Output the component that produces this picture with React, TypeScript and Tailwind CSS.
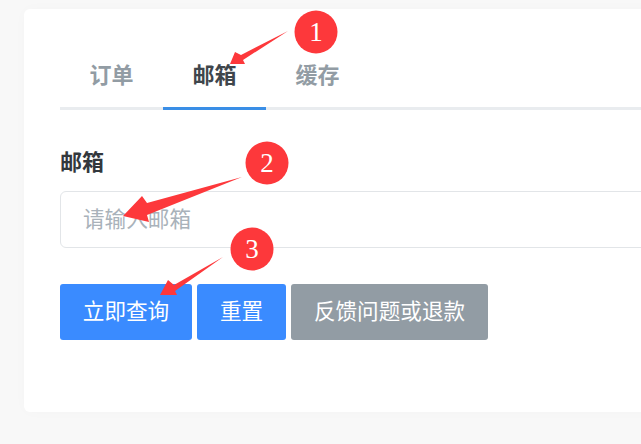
const font = "font-['Liberation_Sans','Noto_Sans_CJK_SC',sans-serif]";

const Marker = ({ cx, cy, n }: { cx: number; cy: number; n: string }) => (
  <g>
    <circle cx={cx} cy={cy} r={21.5} fill="#fd383b" />
    <text x={cx} y={cy + 9} textAnchor="middle" fontSize="27" fill="#fff" fontFamily="Liberation Serif, serif">
      {n}
    </text>
  </g>
);

export default function App() {
  return (
    <div className={`relative h-[444px] w-[641px] overflow-hidden bg-[#f8f8f8] pl-6 pt-[9px] ${font}`}>
      <div className="h-[403px] w-[700px] rounded-md bg-white pl-9 pt-[34px] shadow-[0_0_14px_rgba(0,0,0,0.02)]">
        {/* tabs */}
        <div className="flex h-[67px] border-b-[3px] border-[#e9ecef] text-[22px] font-bold">
          <div className="-mb-[3px] flex w-[103px] justify-center pt-[17px] leading-[32px] text-[#929ca4]">订单</div>
          <div className="-mb-[3px] flex w-[103px] justify-center border-b-[3px] border-[#3a8ee6] pt-[17px] leading-[32px] text-[#3f464c]">邮箱</div>
          <div className="-mb-[3px] flex w-[103px] justify-center pt-[17px] leading-[32px] text-[#929ca4]">缓存</div>
        </div>

        <div className="mt-[37px] text-[22px] font-bold leading-[32px] text-[#33383d]">邮箱</div>
        <input
          placeholder="请输入邮箱"
          className="mt-[12px] block h-[57px] w-[640px] rounded-md border border-[#e2e5e8] px-[22px] text-[21.6px] placeholder:text-[#a9b2ba]"
        />

        <div className="mt-9 flex gap-[5px] text-[21.6px] text-white">
          <button className="h-14 w-[132px] rounded-[3px] bg-[#3a8bff]">立即查询</button>
          <button className="h-14 w-[89px] rounded-[3px] bg-[#3a8bff]">重置</button>
          <button className="h-14 w-[197px] rounded-[3px] bg-[#929ca4]">反馈问题或退款</button>
        </div>
      </div>

      {/* screenshot annotations */}
      <svg className="absolute left-0 top-0" width="641" height="444">
        <g fill="#fd383b">
          <polygon points="288,31 241,55 235,52 230,64 245,64 243,60" />
          <polygon points="242,177 147,203 142,196 123,216 149,222 147,215" />
          <polygon points="223,257 174,285 168,280 160,295 177,295 175,291" />
        </g>
        <Marker cx={316} cy={32} n="1" />
        <Marker cx={267} cy={163} n="2" />
        <Marker cx={252} cy={249} n="3" />
      </svg>
    </div>
  );
}
